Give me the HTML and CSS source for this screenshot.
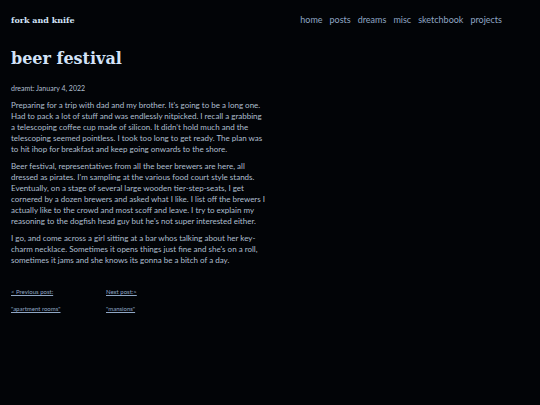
FILE: index.html
```
<!DOCTYPE html>
<html lang="en">
<head>
    <meta charset="UTF-8">
    <meta name="viewport" content="width=device-width, initial-scale=1.0">
    <title>beer festival</title>
    <link rel="stylesheet" href="styles.css">
</head>
<body>
    <header class="header">
        <a class="logo" href="index.html">fork and knife</a>
        <nav class="nav">
            <a href="index.html">home</a>
            <a href="posts.html">posts</a>
            <a href="dreams.html">dreams</a>
            <a href="misc.html">misc</a>
            <a href="sketchbook.html">sketchbook</a>
            <a href="projects.html">projects</a>
        </nav>
    </header>

    <main class="post">
        <h1>beer festival</h1>
        <p class="date">dreamt: January 4, 2022</p>
        <p>Preparing for a trip with dad and my brother. It's going to be a long one. Had to pack a lot of stuff and was endlessly nitpicked. I recall a grabbing a telescoping coffee cup made of silicon. It didn't hold much and the telescoping seemed pointless. I took too long to get ready. The plan was to hit ihop for breakfast and keep going onwards to the shore.</p>
        <p>Beer festival, representatives from all the beer brewers are here, all dressed as pirates. I'm sampling at the various food court style stands. Eventually, on a stage of several large wooden tier-step-seats, I get cornered by a dozen brewers and asked what I like. I list off the brewers I actually like to the crowd and most scoff and leave. I try to explain my reasoning to the dogfish head guy but he's not super interested either.</p>
        <p>I go, and come across a girl sitting at a bar whos talking about her key-charm necklace. Sometimes it opens things just fine and she's on a roll, sometimes it jams and she knows its gonna be a bitch of a day.</p>
    </main>

    <footer class="pager">
        <div class="pager-item">
            <a href="apartment-rooms.html">&lt; Previous post:</a>
            <a href="apartment-rooms.html">"apartment rooms"</a>
        </div>
        <div class="pager-item">
            <a href="mansions.html">Next post:&gt;</a>
            <a href="mansions.html">"mansions"</a>
        </div>
    </footer>
</body>
</html>
```

FILE: styles.css
```
body {
    margin: 0;
    padding: 14px 11px;
    background-color: #020407;
    color: #afbfcf;
    font-family: Lato, sans-serif;
    font-size: 8px;
    line-height: 11px;
}

a {
    color: #8fa6c4;
}

.header {
    display: flex;
    justify-content: space-between;
    align-items: center;
    padding-right: 27px;
    line-height: 12px;
}

.logo {
    color: #d3e3f8;
    font-family: "DejaVu Serif", serif;
    font-size: 8px;
    font-weight: bold;
    text-decoration: none;
}

.nav {
    display: flex;
    gap: 7px;
    font-size: 9px;
}

.nav a {
    text-decoration: none;
}

.post {
    max-width: 254px;
}

h1 {
    margin: 22px 0 13px;
    color: #d3e3f8;
    font-family: "DejaVu Serif", serif;
    font-size: 16px;
    line-height: 22px;
}

p {
    margin: 0 0 6px;
}

.date {
    font-size: 7px;
}

.pager {
    display: flex;
    margin-top: 20px;
    font-size: 6px;
}

.pager-item {
    display: flex;
    flex-direction: column;
    align-items: flex-start;
    gap: 6px;
    width: 95px;
}
```
